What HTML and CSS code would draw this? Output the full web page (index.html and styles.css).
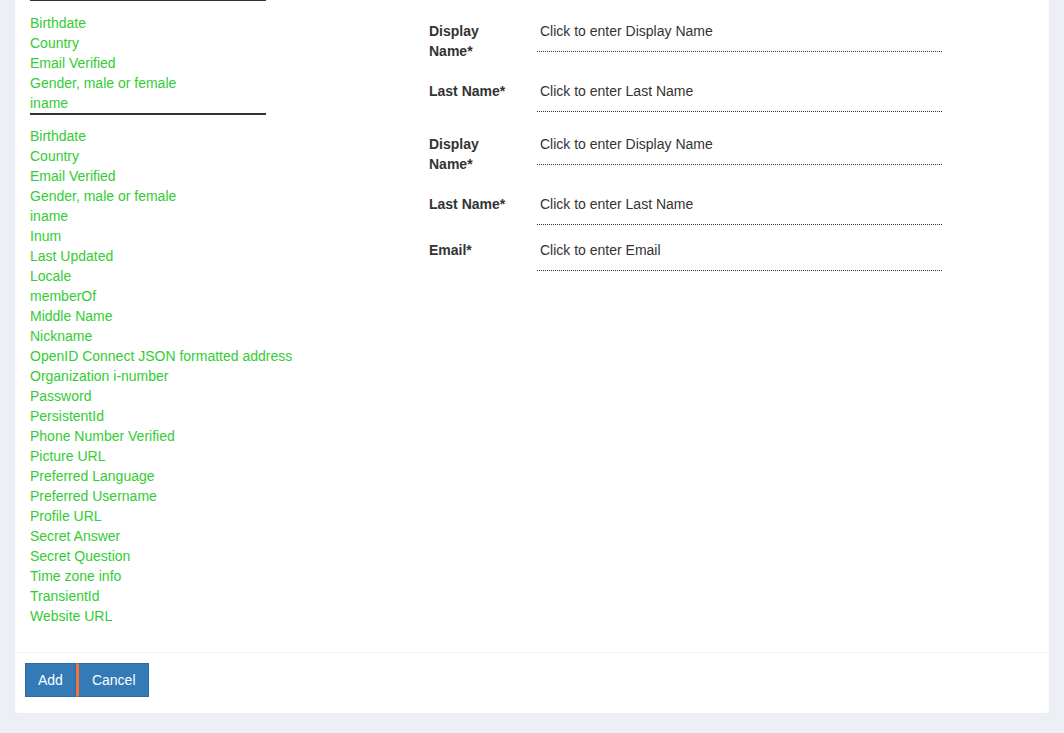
FILE: index.html
```html
<!DOCTYPE html>
<html>
<head>
<meta charset="utf-8">
<link rel="stylesheet" href="styles.css">
</head>
<body>
<div class="card">
  <div class="card-body">
    <div class="attr-col">
      <div class="select-line select-line--cut"></div>
      <ul class="attr-list attr-list--first">
        <li>Birthdate</li>
        <li>Country</li>
        <li>Email Verified</li>
        <li>Gender, male or female</li>
        <li>iname</li>
      </ul>
      <div class="select-line"></div>
      <ul class="attr-list attr-list--second">
        <li>Birthdate</li>
        <li>Country</li>
        <li>Email Verified</li>
        <li>Gender, male or female</li>
        <li>iname</li>
        <li>Inum</li>
        <li>Last Updated</li>
        <li>Locale</li>
        <li>memberOf</li>
        <li>Middle Name</li>
        <li>Nickname</li>
        <li>OpenID Connect JSON formatted address</li>
        <li>Organization i-number</li>
        <li>Password</li>
        <li>PersistentId</li>
        <li>Phone Number Verified</li>
        <li>Picture URL</li>
        <li>Preferred Language</li>
        <li>Preferred Username</li>
        <li>Profile URL</li>
        <li>Secret Answer</li>
        <li>Secret Question</li>
        <li>Time zone info</li>
        <li>TransientId</li>
        <li>Website URL</li>
      </ul>
    </div>
    <div class="form-col">
      <div class="field field--gap20">
        <div class="field-label">Display Name*</div>
        <div class="field-value">Click to enter Display Name</div>
      </div>
      <div class="field field--gap22">
        <div class="field-label">Last Name*</div>
        <div class="field-value">Click to enter Last Name</div>
      </div>
      <div class="field field--gap20">
        <div class="field-label">Display Name*</div>
        <div class="field-value">Click to enter Display Name</div>
      </div>
      <div class="field field--gap15">
        <div class="field-label">Last Name*</div>
        <div class="field-value">Click to enter Last Name</div>
      </div>
      <div class="field">
        <div class="field-label">Email*</div>
        <div class="field-value">Click to enter Email</div>
      </div>
    </div>
  </div>
  <div class="card-footer">
    <button class="btn">Add</button>
    <button class="btn btn--cancel">Cancel</button>
  </div>
</div>
</body>
</html>
```
FILE: styles.css
```css
html, body {
  margin: 0;
  padding: 0;
  background: #ecf0f5;
  font-family: "Liberation Sans", Arial, sans-serif;
  font-size: 14px;
  line-height: 20px;
  color: #333;
}

.card {
  margin: 0 15px;
  background: #fff;
  border-radius: 0 0 3px 3px;
  box-shadow: 0 1px 1px rgba(0, 0, 0, 0.12);
}

.card-body {
  display: flex;
  align-items: flex-start;
  padding: 0 15px 26px 15px;
}

.attr-col {
  flex: 0 0 399px;
}

.select-line {
  width: 236px;
  height: 0;
  border-bottom: 2px solid #333;
}

.select-line--cut {
  margin-top: -1px;
}

.attr-list {
  list-style: none;
  margin: 0;
  padding: 0;
  color: #3c3;
}

.attr-list--first {
  margin-top: 12px;
}

.attr-list--second {
  margin-top: 11px;
}

.form-col {
  flex: 0 0 513px;
  padding-top: 21px;
}

.field {
  display: flex;
  align-items: flex-start;
}

.field--gap20 { margin-bottom: 20px; }
.field--gap22 { margin-bottom: 22px; }
.field--gap15 { margin-bottom: 15px; }

.field-label {
  flex: 0 0 108px;
  box-sizing: border-box;
  padding-right: 15px;
  font-weight: bold;
}

.field-value {
  flex: 0 0 405px;
  box-sizing: border-box;
  padding: 0 0 10px 3px;
  border-bottom: 1px dotted #333;
}

.card-footer {
  display: flex;
  border-top: 1px solid #f4f4f4;
  padding: 10px 10px 16px 10px;
}

.btn {
  font-family: "Liberation Sans", Arial, sans-serif;
  font-size: 14px;
  line-height: 20px;
  color: #fff;
  background: #337ab7;
  border: 1px solid #2e6da4;
  border-radius: 0;
  padding: 6px 12px;
  margin: 0;
}

.btn--cancel {
  border-left: 3px solid #ee7440;
  padding-left: 13px;
  padding-right: 12px;
}
```
